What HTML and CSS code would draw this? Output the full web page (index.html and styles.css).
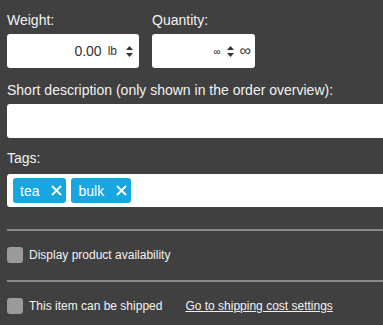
FILE: index.html
```html
<!DOCTYPE html>
<html lang="en">
<head>
    <meta charset="UTF-8">
    <meta name="viewport" content="width=device-width, initial-scale=1.0">
    <title>Product settings</title>
    <link rel="stylesheet" href="styles.css">
</head>
<body>
    <div class="panel">
        <div class="row">
            <div class="form-group weight">
                <label>Weight:</label>
                <div class="field">
                    <span class="value">0.00</span>
                    <span class="unit">lb</span>
                    <svg class="spin" width="7" height="11" viewBox="0 0 7 11"><path d="M3.5 0 L7 4 L0 4 Z M0 7 L7 7 L3.5 11 Z" fill="#333"/></svg>
                </div>
            </div>
            <div class="form-group quantity">
                <label>Quantity:</label>
                <div class="field">
                    <span class="placeholder">∞</span>
                    <svg class="spin" width="7" height="11" viewBox="0 0 7 11"><path d="M3.5 0 L7 4 L0 4 Z M0 7 L7 7 L3.5 11 Z" fill="#333"/></svg>
                    <span class="suffix">∞</span>
                </div>
            </div>
        </div>

        <div class="form-group desc">
            <label>Short description (only shown in the order overview):</label>
            <div class="field wide"></div>
        </div>

        <div class="form-group tags-group">
            <label>Tags:</label>
            <div class="field wide tags">
                <span class="tag">tea
                    <svg width="11" height="11" viewBox="0 0 11 11"><path d="M1 1 L10 10 M10 1 L1 10" stroke="#fff" stroke-width="1.8"/></svg>
                </span>
                <span class="tag">bulk
                    <svg width="11" height="11" viewBox="0 0 11 11"><path d="M1 1 L10 10 M10 1 L1 10" stroke="#fff" stroke-width="1.8"/></svg>
                </span>
            </div>
        </div>

        <div class="option">
            <span class="checkbox"></span>
            <span>Display product availability</span>
        </div>

        <div class="option">
            <span class="checkbox"></span>
            <span>This item can be shipped</span>
            <a href="#" class="link">Go to shipping cost settings</a>
        </div>
    </div>
</body>
</html>
```

FILE: styles.css
```css
body {
    font-family: "Liberation Sans", Arial, sans-serif;
    background-color: #404040;
    color: #f2f2f2;
    margin: 0;
    overflow: hidden;
}
.panel {
    width: 440px;
    padding: 12px 0 0 7px;
}
.row {
    display: flex;
    gap: 13px;
}
.form-group label {
    display: block;
    font-size: 14px;
    line-height: 17px;
    margin-bottom: 5px;
}
.field {
    background: white;
    height: 34px;
    border-radius: 3px;
    box-sizing: border-box;
    display: flex;
    align-items: center;
    justify-content: flex-end;
    color: #333;
}
.weight .field {
    width: 132px;
    padding-right: 6px;
}
.weight .value {
    font-size: 14px;
    margin-right: 6px;
}
.weight .unit {
    font-size: 12px;
    margin-right: 9px;
}
.quantity .field {
    width: 103px;
    padding-right: 4px;
}
.quantity .placeholder {
    font-size: 10px;
    margin-right: 6px;
}
.quantity .suffix {
    font-size: 16px;
    margin-left: 6px;
}
.desc {
    margin-top: 14px;
}
.tags-group {
    margin-top: 12px;
}
.tags-group label {
    margin-bottom: 7px;
}
.field.wide {
    width: 100%;
}
.tags {
    justify-content: flex-start;
    height: 33px;
    padding-left: 6px;
    gap: 5px;
}
.tag {
    background-color: #16a7e2;
    color: white;
    font-size: 14px;
    height: 25px;
    border-radius: 3px;
    display: flex;
    align-items: center;
    padding: 0 4px 0 7px;
    gap: 12px;
}
.option {
    display: flex;
    align-items: center;
    gap: 6px;
    font-size: 12px;
    border-top: 2px solid #8a8a8a;
    padding: 16px 0 17px;
}
.tags-group + .option {
    margin-top: 22px;
}
.checkbox {
    width: 16px;
    height: 16px;
    background: #9a9a9a;
    border-radius: 3px;
}
.link {
    color: #f2f2f2;
    margin-left: 17px;
}
```
